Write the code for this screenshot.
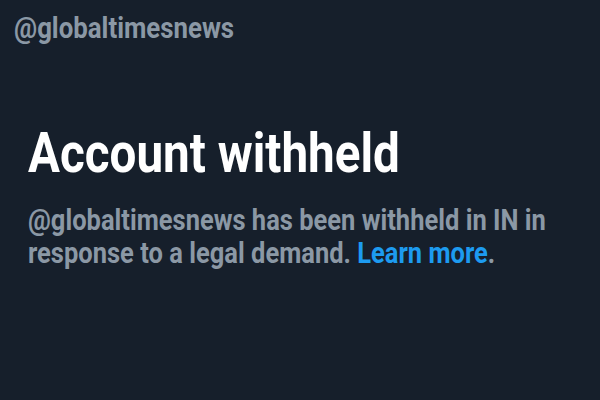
import React from "react";

function App() {
  return (
    <div className="h-[400px] w-full overflow-hidden bg-[#161f2b] font-['Roboto',sans-serif]">
      <div className="pl-[14px] pt-[10px]">
        <div className="origin-left scale-x-[0.86] whitespace-nowrap text-[30px] font-bold leading-[36px] text-[#8b98a5]">
          @globaltimesnews
        </div>
      </div>
      <div className="pl-[28px] pt-[79px]">
        <h1 className="origin-left scale-x-[0.85] whitespace-nowrap text-[56px] font-bold leading-none text-white">
          Account withheld
        </h1>
        <p className="mt-[22px] origin-left scale-x-[0.85] whitespace-nowrap text-[30px] font-bold leading-[33px] text-[#8b98a5]">
          @globaltimesnews has been withheld in IN in
          <br />
          response to a legal demand. <span className="text-[#1d9bf0]">Learn more</span>.
        </p>
      </div>
    </div>
  );
}

export default App;
